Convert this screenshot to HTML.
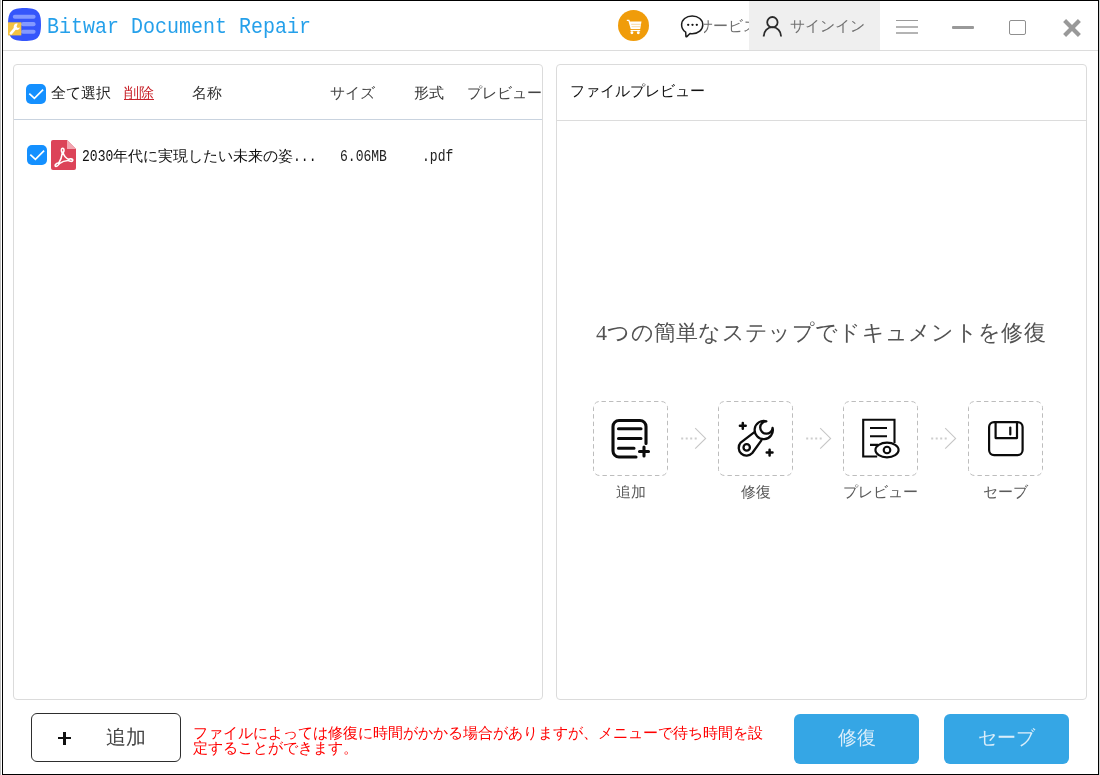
<!DOCTYPE html>
<html lang="ja">
<head>
<meta charset="utf-8">
<title>Bitwar Document Repair</title>
<style>
*{box-sizing:border-box;margin:0;padding:0}
html,body{width:1100px;height:775px;overflow:hidden;background:#fff}
body{position:relative;font-family:"Liberation Sans",sans-serif;font-size:15px;color:#222;-webkit-font-smoothing:antialiased}
#app{position:absolute;left:0;top:0;width:1100px;height:775px;will-change:transform}
.abs{position:absolute}
.t{position:absolute;white-space:nowrap;line-height:16px;height:16px;font-size:15px}
.mono{font-family:"Liberation Mono",monospace}
.serif{font-family:"Liberation Serif",serif}
#edgeL{left:0;top:0;width:1px;height:775px;background:#bdbdbd}
#edgeR{left:1099px;top:0;width:1px;height:775px;background:#d2d2d2}
#frame{left:2px;top:0;width:1097px;height:775px;border:1px solid #000}
#tsep{left:3px;top:50px;width:1095px;height:1px;background:#dcdcdc}
#title{left:47px;top:15.5px;font-size:20px;line-height:26px;height:26px;color:#25a0ea;transform-origin:0 100%;transform:scaleY(1.12)}
.panel{position:absolute;top:64px;height:636px;border:1px solid #dbdbdb;border-radius:4px;background:#fff}
#pl{left:13px;width:530px;overflow:hidden}
#pr{left:556px;width:531px}
.hsep{position:absolute;left:0;right:0;height:1px}
.cb{position:absolute;width:20px;height:20px;border-radius:5px;background:#1490ff}
.cb svg{position:absolute;left:0;top:0}
.box{position:absolute;top:401px;width:75px;height:75px;border:1px dashed #bcbcbc;border-radius:6px}
.lbl{position:absolute;top:483.500px;width:125px;text-align:center;font-size:15px;line-height:16px;color:#5a5a5a;white-space:nowrap}
.btn{position:absolute;top:714px;width:125px;height:50px;border-radius:6px;background:#35a6e5;color:#dbeefa;text-align:center;font-size:19px;line-height:48px;white-space:nowrap}
.num{display:inline-block;font-size:16.500px;line-height:16px;transform:scaleX(0.790);transform-origin:0 50%;vertical-align:top;margin-top:1px}
.numw{display:inline-block;vertical-align:top;overflow:visible}
</style>
</head>
<body>
<div id="app">
<div class="abs" id="edgeL"></div>
<div class="abs" id="edgeR"></div>
<div class="abs" id="frame"></div>

<!-- title bar -->
<svg class="abs" style="left:8px;top:8px" width="33" height="33" viewBox="0 0 33 33">
  <path d="M16.500 0C29.500 0 33 3.500 33 16.500S29.500 33 16.500 33 0 29.500 0 16.500 3.500 0 16.500 0Z" fill="#3556fb"/>
  <rect x="4.800" y="6.800" width="22.800" height="4" rx="2" fill="#8399ff"/>
  <rect x="13" y="14" width="14.600" height="4.300" rx="2.100" fill="#8399ff"/>
  <rect x="13" y="21.800" width="14.600" height="4" rx="2" fill="#8399ff"/>
  <rect x="0" y="14.300" width="13.300" height="13.100" fill="#f4c343"/>
  <path d="M2.900 25.300L7.400 20.100" stroke="#fff" stroke-width="2.700" stroke-linecap="round" fill="none"/>
  <path d="M9.700 15.600a3.200 3.200 0 1 0 2.300 3.900l-2.200.5-1.300-1.400z" fill="#fff"/>
</svg>
<div class="t mono" id="title">Bitwar Document Repair</div>

<!-- cart -->
<svg class="abs" style="left:618px;top:10px" width="31" height="31" viewBox="0 0 31 31">
  <circle cx="15.5" cy="15.5" r="15.5" fill="#f09c0a"/>
  <path d="M8.800 9.700h2.500l.700 1.800h11.500l-1.300 7.500h-9.500l-2.300-7.900h-1.600z" fill="#fff"/>
  <path d="M13.200 14.300h9.500M13.600 16.700h8.900" stroke="#f8cf8c" stroke-width="0.800" fill="none"/>
  <rect x="12.500" y="19.900" width="9.700" height="1.200" fill="#fff"/>
  <circle cx="13.900" cy="22.800" r="1.450" fill="#fff"/><circle cx="20.300" cy="22.800" r="1.450" fill="#fff"/>
</svg>
<!-- service -->
<div class="t" style="left:697.500px;top:18px;width:51.500px;overflow:hidden;color:#6f6f6f;font-size:15px">サービス</div>
<div class="abs" style="left:679px;top:13px;width:25px;height:27px;background:#fff"></div>
<svg class="abs" style="left:679px;top:13px" width="27" height="27" viewBox="0 0 27 27">
  <path d="M13.200 2.900c6.100 0 10.600 3.900 10.600 8.900s-4.500 8.900-10.600 8.900c-.800 0-1.500-.100-2.200-.200l-3.200 3.100c-.400.400-.900.200-.900-.400l-.200-4.100C3.900 17.400 2.600 14.800 2.600 11.800 2.600 6.800 7.100 2.900 13.200 2.900z" fill="#fff" stroke="#1d1d1d" stroke-width="1.500" stroke-linejoin="round"/>
  <circle cx="9.200" cy="11.800" r="1.150" fill="#111"/><circle cx="13.500" cy="11.800" r="1.150" fill="#111"/><circle cx="17.800" cy="11.800" r="1.150" fill="#111"/>
</svg>
<!-- sign in -->
<div class="abs" style="left:749px;top:1px;width:131px;height:49px;background:#efefef"></div>
<svg class="abs" style="left:760px;top:14px" width="26" height="26" viewBox="0 0 26 26">
  <circle cx="12.400" cy="8.200" r="5.200" fill="none" stroke="#2b2b2b" stroke-width="1.800"/>
  <path d="M3.700 22.400c0-5 3.800-9.200 8.700-9.200s8.700 4.200 8.700 9.200" fill="none" stroke="#2b2b2b" stroke-width="1.800"/>
</svg>
<div class="t" style="left:790px;top:18px;color:#707070;font-size:14.500px">サインイン</div>
<!-- window controls -->
<div class="abs" style="left:896px;top:20px;width:22px;height:1px;background:#9a9a9a"></div>
<div class="abs" style="left:896px;top:26px;width:22px;height:2px;background:#b4b4b4"></div>
<div class="abs" style="left:896px;top:32px;width:22px;height:2px;background:#b4b4b4"></div>
<div class="abs" style="left:952px;top:26px;width:22px;height:3px;background:#999;border-radius:1px"></div>
<div class="abs" style="left:1009px;top:20px;width:17px;height:15px;border:1px solid #8f8f8f;border-radius:2px"></div>
<svg class="abs" style="left:1060px;top:16px" width="24" height="24" viewBox="0 0 24 24">
  <path d="M4.600 4.600l14.800 14.800M19.400 4.600L4.600 19.400" stroke="#999" stroke-width="4.200" stroke-linecap="butt" fill="none"/>
</svg>
<div class="abs" id="tsep"></div>

<!-- left panel -->
<div class="panel" id="pl">
  <div class="hsep" style="top:54px;background:#c9d3df"></div>
</div>
<!-- left panel header (page coords) -->
<div class="cb" style="left:26px;top:84px"><svg width="20" height="20" viewBox="0 0 20 20"><path d="M3.300 9.700l5.100 4.700 8.700-8.700" fill="none" stroke="#fff" stroke-width="1.700"/></svg></div>
<div class="t" style="left:51px;top:85px;color:#222">全て選択</div>
<div class="t" style="left:124px;top:85px;color:#c8242c;text-decoration:underline">削除</div>
<div class="t" style="left:192px;top:85px;color:#333">名称</div>
<div class="t" style="left:330px;top:85px;color:#444">サイズ</div>
<div class="t" style="left:414px;top:85px;color:#333">形式</div>
<div class="t" style="left:467px;top:85px;width:75px;overflow:hidden;color:#444">プレビュー</div>
<!-- row -->
<div class="cb" style="left:27px;top:145px"><svg width="20" height="20" viewBox="0 0 20 20"><path d="M3.300 9.700l5.100 4.700 8.700-8.700" fill="none" stroke="#fff" stroke-width="1.700"/></svg></div>
<svg class="abs" style="left:51px;top:140px" width="25" height="30" viewBox="0 0 25 30">
  <path d="M2 0h14l9 9v19a2 2 0 0 1-2 2H2a2 2 0 0 1-2-2V2a2 2 0 0 1 2-2z" fill="#dc4358"/>
  <path d="M16 0l9 9h-9z" fill="#f2a5b0"/>
  <g fill="none" stroke="#fff" stroke-width="1.550" stroke-linecap="round">
    <ellipse cx="11.700" cy="10.300" rx="1.300" ry="2.100"/>
    <ellipse cx="19.700" cy="20.100" rx="2.100" ry="1.250" transform="rotate(8 19.700 20.100)"/>
    <ellipse cx="6" cy="24.700" rx="2.200" ry="1.150" transform="rotate(-35 6 24.700)"/>
    <path d="M11.400 12.400C11 16 9.600 20.400 7.500 23.500M12 12.400C12.800 15.600 15.400 18.500 17.700 19.500M7.900 23.900C11 21.600 15 20.400 17.600 20.500"/>
  </g>
</svg>
<div class="t" style="left:82px;top:148px;color:#111"><span class="numw" style="width:30.500px"><span class="mono num">2030</span></span>年代に実現したい未来の姿<span class="numw" style="width:23px"><span class="mono num">...</span></span></div>
<div class="t mono num" style="left:340px;top:148px;color:#222">6.06MB</div>
<div class="t mono num" style="left:422px;top:148px;color:#222">.pdf</div>
<!-- right panel -->
<div class="panel" id="pr">
  <div class="hsep" style="top:55px;background:#dcdcdc"></div>
</div>
<div class="t" style="left:570px;top:83px;color:#111">ファイルプレビュー</div>
<div class="t serif" id="head" style="left:596px;top:318px;font-size:22px;line-height:30px;height:30px;letter-spacing:0.300px;color:#525252">4つの簡単なステップでドキュメントを修復</div>
<svg class="abs" style="left:593px;top:401px" width="75" height="75" viewBox="0 0 75 75"><rect x="0.500" y="0.500" width="74" height="74" rx="6" fill="none" stroke="#bdbdbd" stroke-width="1" stroke-dasharray="4.400 3.100" stroke-dashoffset="-2"/></svg>
<svg class="abs" style="left:718px;top:401px" width="75" height="75" viewBox="0 0 75 75"><rect x="0.500" y="0.500" width="74" height="74" rx="6" fill="none" stroke="#bdbdbd" stroke-width="1" stroke-dasharray="4.400 3.100" stroke-dashoffset="-2"/></svg>
<svg class="abs" style="left:843px;top:401px" width="75" height="75" viewBox="0 0 75 75"><rect x="0.500" y="0.500" width="74" height="74" rx="6" fill="none" stroke="#bdbdbd" stroke-width="1" stroke-dasharray="4.400 3.100" stroke-dashoffset="-2"/></svg>
<svg class="abs" style="left:968px;top:401px" width="75" height="75" viewBox="0 0 75 75"><rect x="0.500" y="0.500" width="74" height="74" rx="6" fill="none" stroke="#bdbdbd" stroke-width="1" stroke-dasharray="4.400 3.100" stroke-dashoffset="-2"/></svg>
<svg class="abs" style="left:680px;top:426px" width="28" height="25" viewBox="0 0 28 25"><path d="M1.200 12.400h17" stroke="#cdcdcd" stroke-width="2" stroke-dasharray="2 2.500" fill="none"/><path d="M15.200 2.100l10.400 10.300-10.400 10.300" stroke="#c6c6c6" stroke-width="1.100" fill="none"/></svg>
<svg class="abs" style="left:805px;top:426px" width="28" height="25" viewBox="0 0 28 25"><path d="M1.200 12.400h17" stroke="#cdcdcd" stroke-width="2" stroke-dasharray="2 2.500" fill="none"/><path d="M15.200 2.100l10.400 10.300-10.400 10.300" stroke="#c6c6c6" stroke-width="1.100" fill="none"/></svg>
<svg class="abs" style="left:930px;top:426px" width="28" height="25" viewBox="0 0 28 25"><path d="M1.200 12.400h17" stroke="#cdcdcd" stroke-width="2" stroke-dasharray="2 2.500" fill="none"/><path d="M15.200 2.100l10.400 10.300-10.400 10.300" stroke="#c6c6c6" stroke-width="1.100" fill="none"/></svg>

<!-- step icons -->
<svg class="abs" style="left:609px;top:416px" width="44" height="46" viewBox="0 0 44 46">
  <g fill="none" stroke="#0b0b0b" stroke-width="3.100" stroke-linecap="round" stroke-linejoin="round">
    <path d="M37 27.500V10.500a6 6 0 0 0-6-6H10a6 6 0 0 0-6 6V35a6 6 0 0 0 6 6h17"/>
    <path d="M9.500 12.700h22.500M9.500 22.500h22.500M9.500 32.200h15.500"/>
    <path d="M30.500 35.500h9M35 31v9"/>
  </g>
</svg>
<svg class="abs" style="left:735px;top:417px" width="42" height="42" viewBox="0 0 42 42">
  <g fill="none" stroke="#0b0b0b" stroke-width="2.300" stroke-linecap="round" stroke-linejoin="round">
    <path d="M31.400 4.300A9.100 9.100 0 1 0 37.600 10.900A6.200 6.200 0 1 1 31.400 4.300z"/>
    <path d="M19.400 15.100L5.700 25.600A7.400 7.400 0 1 0 17.300 36L26.400 23.300"/>
    <circle cx="11.700" cy="30.400" r="3.200"/>
  </g>
  <g fill="none" stroke="#0b0b0b" stroke-width="2.500" stroke-linecap="round">
    <path d="M4.900 8.800h5.800M7.800 5.900v5.800"/>
    <path d="M31.700 35.600h5.800M34.600 32.700v5.800"/>
  </g>
</svg>
<svg class="abs" style="left:860px;top:416px" width="42" height="46" viewBox="0 0 42 46">
  <g fill="none" stroke="#0b0b0b" stroke-width="2.100">
    <path d="M34.500 27V3.800H3.200v36.700h14"/>
    <path d="M10 12h17M10 20.300h17M10 28.900h8"/>
    <ellipse cx="27" cy="34" rx="11.600" ry="7.400" fill="#fff"/>
    <circle cx="27" cy="34" r="3.300"/>
  </g>
</svg>
<svg class="abs" style="left:986px;top:419px" width="40" height="40" viewBox="0 0 40 40">
  <g fill="none" stroke="#0b0b0b" stroke-width="2.200" stroke-linejoin="round">
    <rect x="3.100" y="3.100" width="33.500" height="33" rx="5"/>
    <path d="M9.600 3.100v16h21.400v-16"/>
    <path d="M24.300 8.500v7" stroke-linecap="round"/>
  </g>
</svg>
<div class="lbl" style="left:568px">追加</div>
<div class="lbl" style="left:693px">修復</div>
<div class="lbl" style="left:818px">プレビュー</div>
<div class="lbl" style="left:943px">セーブ</div>

<!-- bottom bar -->
<div class="abs" style="left:31px;top:713px;width:150px;height:49px;border:1px solid #2e2e2e;border-radius:6px;background:#fff"></div>
<div class="abs" style="left:58.200px;top:736.900px;width:13px;height:2.600px;background:#111"></div>
<div class="abs" style="left:63.400px;top:731.700px;width:2.600px;height:13px;background:#111"></div>
<div class="t serif" style="left:106px;top:725px;font-size:19.500px;line-height:26px;height:26px;color:#444">追加</div>
<div class="t" id="red" style="left:192.500px;top:726px;height:auto;line-height:14.500px;color:#f00">ファイルによっては修復に時間がかかる場合がありますが、メニューで待ち時間を設<br>定することができます。</div>
<div class="btn serif" style="left:794px">修復</div>
<div class="btn serif" style="left:944px">セーブ</div>

</div>
</body>
</html>
